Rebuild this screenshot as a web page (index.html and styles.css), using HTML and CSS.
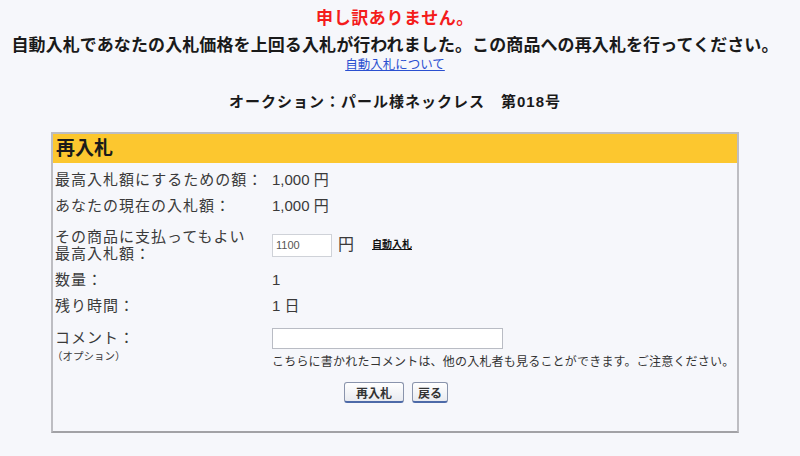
FILE: index.html
```html
<!DOCTYPE html>
<html lang="ja">
<head>
<meta charset="utf-8">
<title>再入札</title>
<link rel="stylesheet" href="styles.css">
</head>
<body>
<div class="page">
  <div class="notice">
    <h1 class="sorry">申し訳ありません。</h1>
    <p class="msg">自動入札であなたの入札価格を上回る入札が行われました。この商品への再入札を行ってください。</p>
    <p class="about"><a href="#">自動入札について</a></p>
  </div>
  <h2 class="auction">オークション：パール様ネックレス　第018号</h2>
  <div class="box">
    <div class="box-head">再入札</div>
    <div class="form">
      <div class="row">
        <div class="label">最高入札額にするための額：</div>
        <div class="value">1,000 円</div>
      </div>
      <div class="row">
        <div class="label">あなたの現在の入札額：</div>
        <div class="value">1,000 円</div>
      </div>
      <div class="row row-price">
        <div class="label label-2">その商品に支払ってもよい<br>最高入札額：</div>
        <div class="value price">
          <input class="price-input" type="text" value="1100">
          <span class="yen">円</span>
          <a class="auto" href="#">自動入札</a>
        </div>
      </div>
      <div class="row">
        <div class="label">数量：</div>
        <div class="value">1</div>
      </div>
      <div class="row">
        <div class="label">残り時間：</div>
        <div class="value">1 日</div>
      </div>
      <div class="row row-comment">
        <div class="label label-comment">コメント：<span class="opt">（オプション）</span></div>
        <div class="value comment">
          <input class="comment-input" type="text">
          <p class="note">こちらに書かれたコメントは、他の入札者も見ることができます。ご注意ください。</p>
        </div>
      </div>
      <div class="buttons">
        <button class="btn btn-bid" type="button">再入札</button>
        <button class="btn btn-back" type="button">戻る</button>
      </div>
    </div>
  </div>
</div>
</body>
</html>
```

FILE: styles.css
```css
html, body {
  margin: 0;
  padding: 0;
  background: #f6f7fb;
}
body {
  font-family: "Liberation Sans", "Noto Sans CJK JP", sans-serif;
  color: #222;
}
.page {
  width: 790px;
}
.notice {
  padding-top: 5px;
  text-align: center;
}
.sorry {
  margin: 0;
  font-size: 17px;
  line-height: 27px;
  font-weight: 700;
  letter-spacing: 0.6px;
  color: #f41c1c;
}
.msg {
  margin: 0;
  font-size: 17px;
  line-height: 27px;
  font-weight: 700;
  letter-spacing: 0.1px;
  color: #1a1a1a;
  white-space: nowrap;
}
.about {
  margin: 0;
  font-size: 12.5px;
  line-height: 12px;
}
.about a {
  color: #2a4fd0;
  text-decoration: underline;
}
.auction {
  margin: 21px 0 0;
  font-size: 15px;
  line-height: 20px;
  font-weight: 700;
  letter-spacing: 1px;
  text-align: center;
  color: #1a1a1a;
}
.box {
  margin: 20px auto 0;
  width: 688px;
  box-sizing: border-box;
  border: 2px solid #bdbdc2;
  border-bottom-color: #a2a2a6;
}
.box-head {
  height: 29px;
  line-height: 29px;
  padding-left: 3px;
  background: #fcc72f;
  font-size: 19px;
  font-weight: 700;
  color: #1a1a1a;
}
.form {
  padding: 4px 0 28px 2px;
}
.row {
  display: grid;
  grid-template-columns: 217px 1fr;
  align-items: center;
  padding: 4px 0;
  line-height: 18px;
}
.label {
  font-size: 15px;
  letter-spacing: 1px;
  color: #3a3a3a;
}
.value {
  font-size: 15px;
  color: #3a3a3a;
}
.row-price {
  padding: 9px 0 5px;
}
.label-2 {
  line-height: 17px;
}
.price {
  display: flex;
  align-items: center;
}
.price-input {
  width: 60px;
  height: 23px;
  box-sizing: border-box;
  margin: 0;
  padding: 0 3px;
  border: 1px solid #cfd2d8;
  background: #fff;
  font-family: "Liberation Sans", sans-serif;
  font-size: 11px;
  color: #555;
}
.yen {
  margin-left: 6px;
  font-size: 16px;
}
.auto {
  margin-left: 18px;
  font-size: 10px;
  font-weight: 700;
  color: #111;
  text-decoration: underline;
}
.row-comment {
  align-items: start;
  padding: 0;
}
.label-comment {
  padding-top: 10px;
  display: flex;
  flex-direction: column;
}
.opt {
  font-size: 10.5px;
  letter-spacing: 0;
  line-height: 18px;
  margin-left: -3px;
}
.comment {
  padding-top: 9px;
}
.comment-input {
  display: block;
  width: 231px;
  height: 21px;
  box-sizing: border-box;
  margin: 0;
  border: 1px solid #b9bcc4;
  background: #fff;
}
.note {
  margin: 5px 0 0;
  font-size: 12px;
  line-height: 16px;
  letter-spacing: 0.2px;
  color: #333;
  white-space: nowrap;
}
.buttons {
  display: flex;
  justify-content: center;
  gap: 8px;
  margin-top: 12px;
}
.btn {
  height: 21px;
  margin: 0;
  padding: 0;
  border: 1px solid #8a94ac;
  border-bottom: 2px solid #4d6aa8;
  border-radius: 3px;
  background: linear-gradient(#ffffff, #e9ebf0);
  font-family: "Liberation Sans", "Noto Sans CJK JP", sans-serif;
  font-size: 12px;
  font-weight: 700;
  color: #333;
}
.btn-bid {
  width: 60px;
}
.btn-back {
  width: 36px;
}
```
